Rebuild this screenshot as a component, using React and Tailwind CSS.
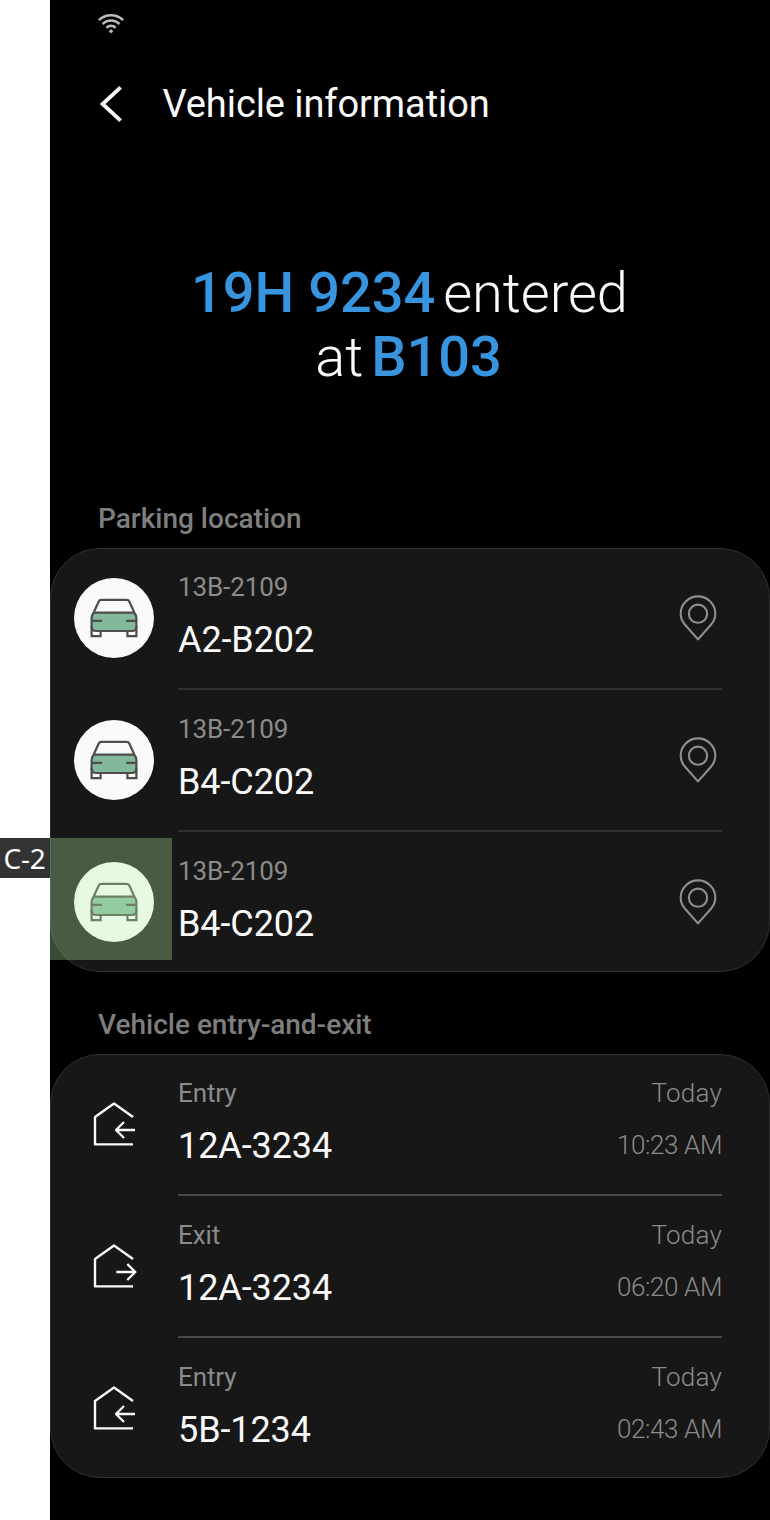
import React from "react";

const parking = [
  { plate: "13B-2109", spot: "A2-B202" },
  { plate: "13B-2109", spot: "B4-C202" },
  { plate: "13B-2109", spot: "B4-C202", marker: "C-2" },
];

const history = [
  { type: "Entry", plate: "12A-3234", day: "Today", time: "10:23 AM" },
  { type: "Exit", plate: "12A-3234", day: "Today", time: "06:20 AM" },
  { type: "Entry", plate: "5B-1234", day: "Today", time: "02:43 AM" },
];

function WifiIcon() {
  return (
    <svg width="26" height="20" viewBox="0 0 26 20" fill="none" stroke="#bdbdbd" strokeWidth="2.5">
      <path d="M0.9 6.2C7.5 -0.4 18.5 -0.4 25.1 6.2" />
      <path d="M4.6 10C9.2 5.4 16.8 5.4 21.4 10" />
      <path d="M8.4 13.8C11 11.2 15 11.2 17.6 13.8" />
      <circle cx="13" cy="17.3" r="1.8" fill="#bdbdbd" stroke="none" />
    </svg>
  );
}

function CarIcon() {
  return (
    <svg className="size-20 shrink-0" viewBox="0 0 80 80" fill="none" stroke="#4d4d4d" strokeWidth="2.2">
      <circle cx="40" cy="40" r="40" fill="#fafafa" stroke="none" />
      <rect x="17.6" y="34.7" width="44.8" height="18.3" rx="4.4" fill="#82b99b" stroke="none" />
      <path d="M17.6 48V58.2H26.6V53M62.4 48V58.2H53.4V53" />
      <path d="M19.6 34.7H60.4M17.6 42.8H28M62.4 42.8H52" />
      <path d="M19.6 34.7L24.6 23.7Q25.4 21.9 27.4 21.9H52.6Q54.6 21.9 55.4 23.7L60.4 34.7C61.7 36.3 62.4 38.2 62.4 40.3V48.4Q62.4 53 57.8 53H22.2Q17.6 53 17.6 48.4V40.3C17.6 38.2 18.3 36.3 19.6 34.7Z" />
    </svg>
  );
}

function PinIcon() {
  return (
    <svg className="shrink-0" width="48" height="48" viewBox="0 0 48 48" fill="none" stroke="#8f8f8f" strokeWidth="2.1">
      <path d="M24 45.4L10.6 30.2C8.1 27.2 6.7 23.7 6.7 19.7a17.3 17.3 0 0 1 34.6 0c0 4-1.4 7.5-3.9 10.5Z" strokeLinejoin="round" />
      <circle cx="24" cy="19.7" r="9.1" />
    </svg>
  );
}

function HouseIcon({ exit }) {
  return (
    <svg className="size-20 shrink-0" viewBox="0 0 80 80" fill="none" stroke="#fafafa" strokeWidth="2.4" strokeLinejoin="round">
      <path d="M59 33L40 19.4L21 33V60.4H59" />
      {exit ? <path d="M42.3 46H61.3M53.3 38L61.3 46L53.3 54" /> : <path d="M61 46H42M50 38L42 46L50 54" />}
    </svg>
  );
}

function Card({ children }) {
  return (
    <section className="h-[424px] rounded-[50px] border border-[#303030] bg-[#171717] pl-[23px] pr-[47px]">
      {children}
    </section>
  );
}

function Row({ icon, label, value, line, last, marker, children }) {
  return (
    <div className={`relative flex items-center gap-6 ${last ? "h-[140px]" : "h-[142px]"} first:-mt-px`}>
      <div className={last ? "" : "pb-0.5"}>{icon}</div>
      <div className={`flex h-full flex-1 items-center justify-between ${last ? "" : `border-b-2 ${line}`}`}>
        <div className="whitespace-nowrap pb-1">
          <p className="text-[26px] leading-[38px] tracking-[-0.1px] text-[#8b8b8b]">{label}</p>
          <p className="mt-[9px] text-[36px] leading-[50px] tracking-[-0.1px] text-[#fafafa]">{value}</p>
        </div>
        {children}
      </div>
      {marker && (
        <>
          <div className="absolute -left-6 top-[6px] h-[122px] w-[122px] bg-[#befdaa]/30" />
          <div className="absolute -left-[74px] top-[6px] flex h-10 w-[50px] items-center justify-center bg-[#333] pb-px pr-px font-['Noto_Sans',sans-serif] text-[28px] leading-none tracking-[-0.2px] text-white">
            {marker}
          </div>
        </>
      )}
    </div>
  );
}

export default function App() {
  return (
    <div className="h-[1520px] w-[770px] overflow-hidden bg-white pl-[50px] font-[Roboto,sans-serif]">
      <main className="h-full w-[720px] bg-black">
        <div className="h-12 pl-12 pt-[14px]">
          <WifiIcon />
        </div>
        <header className="flex h-28 items-center pl-12">
          <svg width="28" height="40" viewBox="0 0 28 40" fill="none" stroke="#fafafa" strokeWidth="3.8">
            <path d="M22.6 3.3L4.6 20L22.6 36.7" />
          </svg>
          <h1 className="ml-[36.5px] whitespace-nowrap text-[38px] leading-none tracking-[-0.08px] text-[#fafafa]">Vehicle information</h1>
        </header>
        <div className="mt-[101px] h-32 whitespace-nowrap text-center text-[56px] font-light leading-[64px] tracking-[-0.06px] text-[#fafafa]">
          <p className="-ml-px"><span className="font-medium text-[#3794de]">19H 9234</span><span className="ml-2">entered</span></p>
          <p className="-ml-[3px]">at<span className="ml-2 font-medium text-[#3794de]">B103</span></p>
        </div>
        <h2 className="flex h-[159px] items-end pb-[11px] pl-12 text-[28px] font-medium leading-9 text-[#7e7e7e]">Parking location</h2>
        <Card>
          {parking.map((p, i) => (
            <Row key={i} icon={<CarIcon />} label={p.plate} value={p.spot} line="border-[#303030]" last={i === 2} marker={p.marker}>
              <PinIcon />
            </Row>
          ))}
        </Card>
        <h2 className="flex h-[82px] items-end pb-[11px] pl-12 text-[28px] font-medium leading-9 text-[#7e7e7e]">Vehicle entry-and-exit</h2>
        <Card>
          {history.map((h, i) => (
            <Row key={i} icon={<HouseIcon exit={h.type === "Exit"} />} label={h.type} value={h.plate} line="border-[#484848]" last={i === 2}>
              <div className="whitespace-nowrap pb-1 text-right text-[26px] font-light text-[#8b8b8b]">
                <p className="leading-[38px] tracking-[0.2px]">{h.day}</p>
                <p className="mt-2 leading-[50px] tracking-[-0.4px]">{h.time}</p>
              </div>
            </Row>
          ))}
        </Card>
      </main>
    </div>
  );
}
